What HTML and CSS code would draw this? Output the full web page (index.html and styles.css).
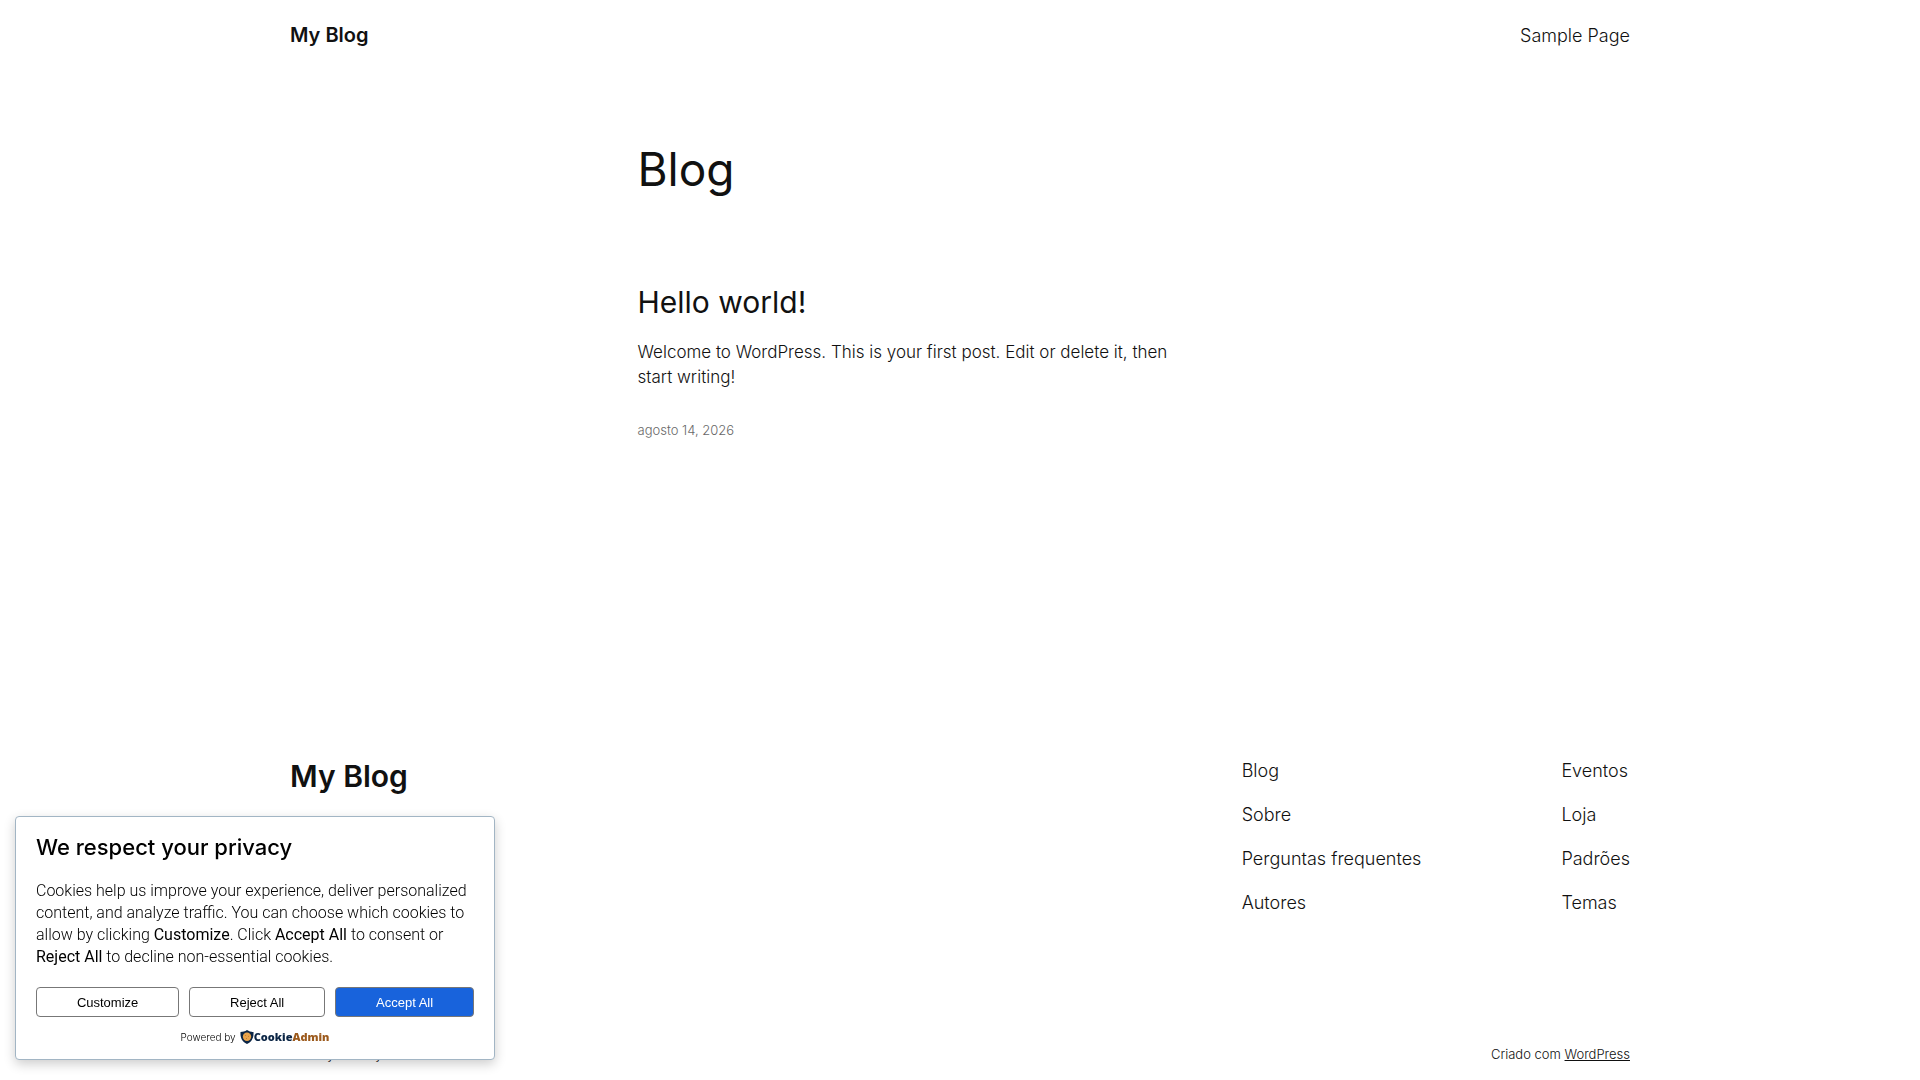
FILE: index.html
```html
<!DOCTYPE html>
<html lang="pt-BR">
<head>
<meta charset="utf-8">
<meta name="viewport" content="width=device-width, initial-scale=1">
<title>My Blog</title>
<link rel="stylesheet" href="styles.css">
</head>
<body>
<div class="page">
  <header class="site-header wide">
    <a class="site-title" href="#">My Blog</a>
    <nav><a href="#">Sample Page</a></nav>
  </header>
  <main class="content">
    <h1 class="page-title">Blog</h1>
    <article class="post">
      <h2 class="post-title"><a href="#">Hello world!</a></h2>
      <p class="excerpt">Welcome to WordPress. This is your first post. Edit or delete it, then start writing!</p>
      <a class="post-date" href="#"><time datetime="2026-08-14">agosto 14, 2026</time></a>
    </article>
  </main>
  <footer class="site-footer wide">
    <div class="footer-main">
      <h2 class="footer-title"><a href="#">My Blog</a></h2>
      <nav class="footer-nav">
        <ul class="link-list">
          <li><a href="#">Blog</a></li>
          <li><a href="#">Sobre</a></li>
          <li><a href="#">Perguntas frequentes</a></li>
          <li><a href="#">Autores</a></li>
        </ul>
        <ul class="link-list">
          <li><a href="#">Eventos</a></li>
          <li><a href="#">Loja</a></li>
          <li><a href="#">Padrões</a></li>
          <li><a href="#">Temas</a></li>
        </ul>
      </nav>
    </div>
    <div class="footer-base">
      <p>Twenty Twenty-Five</p>
      <p>Criado com <a class="credit" href="#">WordPress</a></p>
    </div>
  </footer>
</div>
<section class="consent" aria-labelledby="consent-title">
  <h2 class="consent-title" id="consent-title">We respect your privacy</h2>
  <p class="consent-text">Cookies help us improve your experience, deliver personalized content, and analyze traffic. You can choose which cookies to allow by clicking <strong>Customize</strong>. Click <strong>Accept All</strong> to consent or <strong>Reject All</strong> to decline non-essential cookies.</p>
  <div class="consent-actions">
    <button class="btn" type="button">Customize</button>
    <button class="btn" type="button">Reject All</button>
    <button class="btn btn-primary" type="button">Accept All</button>
  </div>
  <div class="powered">
    <span>Powered by</span>
    <a class="brand" href="#">
      <svg class="shield" viewBox="0 0 14 14" aria-hidden="true">
        <path d="M7 0C5 1.400 2.800 1.900.5 1.900C.2 7 1.400 11.400 7 14C12.600 11.400 13.800 7 13.500 1.900C11.200 1.900 9 1.400 7 0Z" fill="#0b2545"/>
        <circle cx="7" cy="6.800" r="4.200" fill="#e9a44c"/>
        <circle cx="5.600" cy="5.600" r=".5" fill="#b4722a"/>
        <circle cx="8.500" cy="6.300" r=".5" fill="#b4722a"/>
        <circle cx="6.500" cy="8.600" r=".5" fill="#b4722a"/>
      </svg>
      <span><span class="brand-a">Cookie</span><span class="brand-b">Admin</span></span>
    </a>
  </div>
</section>
</body>
</html>
```
FILE: styles.css
```css
* { box-sizing: border-box; }

body {
  margin: 0;
  background: #fff;
  color: #111;
  font: 300 18px/25px Inter, "Liberation Sans", sans-serif;
}

h1, h2, p, ul { margin: 0; padding: 0; }
ul { list-style: none; }
a { color: inherit; text-decoration: none; }

.page {
  display: flex;
  flex-direction: column;
  min-height: 100vh;
  padding: 0 50px;
}

.wide {
  width: 100%;
  max-width: 1340px;
  margin: 0 auto;
}

.site-header {
  display: flex;
  align-items: center;
  justify-content: space-between;
  padding: 20px 0;
}

.site-title {
  font-size: 20px;
  line-height: 31px;
  font-weight: 600;
}

.content {
  flex: 1;
  width: 100%;
  max-width: 645px;
  margin: 0 auto;
  padding-top: 71px;
}

.page-title {
  font-size: 46px;
  line-height: 54px;
  font-weight: 400;
}

.post { padding: 88px 80px 0 0; }

.post-title {
  margin-bottom: 20px;
  font-size: 30px;
  line-height: 36px;
  font-weight: 400;
}

.excerpt { font-size: 17px; }

.post-date {
  display: block;
  margin-top: 30px;
  color: #686868;
  font-size: 13px;
  line-height: 20px;
}

.footer-main {
  display: flex;
  justify-content: space-between;
  align-items: flex-start;
}

.footer-title {
  font-size: 30px;
  line-height: 36px;
  font-weight: 600;
}

.footer-nav { display: flex; gap: 140px; }

.link-list { display: grid; gap: 19px; }

.footer-base {
  display: flex;
  justify-content: space-between;
  padding: 129px 0 16px;
  font-size: 13px;
  line-height: 20px;
}

.credit { text-decoration: underline; }

.consent {
  position: fixed;
  left: 15px;
  bottom: 20px;
  width: 480px;
  max-width: calc(100% - 30px);
  padding: 14px 20px;
  border: 1px solid #a2b5c4;
  border-radius: 4px;
  background: #fff;
  color: #000;
  box-shadow: 0 4px 12px rgba(0, 0, 0, .2);
}

.consent-title {
  font-size: 22px;
  line-height: 32px;
  font-weight: 500;
}

.consent-text {
  margin: 17px 0 19px;
  font: 300 16px/22px Roboto, "Liberation Sans", sans-serif;
}

.consent-text strong { font-weight: 400; }

.consent-actions { display: flex; gap: 10px; }

.btn {
  flex: 1 1 auto;
  height: 30px;
  padding: 0 6px;
  border: 1px solid #777;
  border-radius: 4px;
  background: #fff;
  color: #000;
  font: 13px/15px "Liberation Sans", sans-serif;
}

.btn-primary { background: #1863dc; color: #fff; }

.powered {
  display: flex;
  align-items: center;
  justify-content: center;
  gap: 4px;
  margin-top: 12px;
  font-size: 10px;
  line-height: 16px;
}

.brand {
  display: flex;
  align-items: center;
  font: 800 11px/16px "Open Sans", sans-serif;
}

.shield { width: 14px; height: 14px; }
.brand-a { color: #0b2545; }
.brand-b { color: #9c5a1c; }
```
